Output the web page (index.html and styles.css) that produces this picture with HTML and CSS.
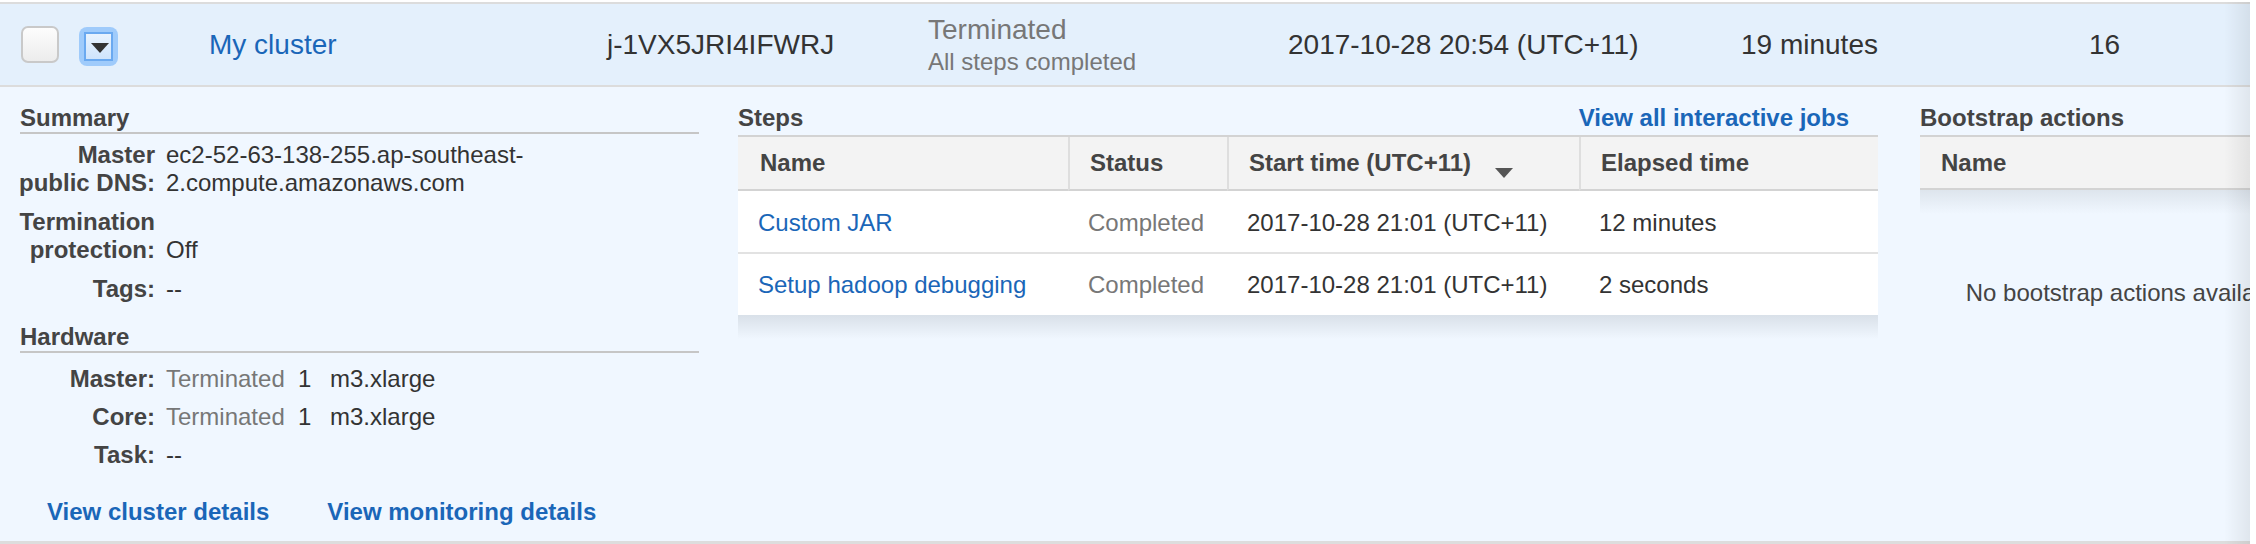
FILE: index.html
```html
<!DOCTYPE html>
<html lang="en">
<head>
<meta charset="utf-8">
<title>EMR cluster</title>
<link rel="stylesheet" href="styles.css">
</head>
<body>
<div class="viewport">
  <div class="grid-table">
    <div class="cluster-row">
      <div class="cell"><span class="checkbox"></span></div>
      <div class="cell">
        <span class="expand"><span class="expand-inner"><svg width="18" height="10" viewBox="0 0 18 10"><polygon points="0,0 18,0 9,10" fill="#333"/></svg></span></span>
      </div>
      <div class="cell"><a class="link" href="#">My cluster</a></div>
      <div class="cell">j-1VX5JRI4IFWRJ</div>
      <div class="cell status">
        <div class="st-main">Terminated</div>
        <div class="st-sub">All steps completed</div>
      </div>
      <div class="cell">2017-10-28 20:54 (UTC+11)</div>
      <div class="cell">19 minutes</div>
      <div class="cell">16</div>
    </div>

    <div class="details">
      <section class="summary">
        <h3 class="sec-title underlined">Summary</h3>
        <dl class="kv">
          <dt>Master<br>public DNS:</dt>
          <dd>ec2-52-63-138-255.ap-southeast-<br>2.compute.amazonaws.com</dd>
          <dt>Termination<br>protection:</dt>
          <dd><br>Off</dd>
          <dt>Tags:</dt>
          <dd>--</dd>
        </dl>
        <h3 class="sec-title underlined hw-title">Hardware</h3>
        <dl class="kv hw">
          <dt>Master:</dt>
          <dd><span class="hw-state">Terminated</span><span class="hw-count">1</span><span>m3.xlarge</span></dd>
          <dt>Core:</dt>
          <dd><span class="hw-state">Terminated</span><span class="hw-count">1</span><span>m3.xlarge</span></dd>
          <dt>Task:</dt>
          <dd>--</dd>
        </dl>
        <div class="bottom-links">
          <a class="link bold" href="#">View cluster details</a>
          <a class="link bold" href="#">View monitoring details</a>
        </div>
      </section>

      <section class="steps">
        <div class="sec-head">
          <h3 class="sec-title">Steps</h3>
          <a class="link bold" href="#">View all interactive jobs</a>
        </div>
        <div class="st-table">
          <div class="th">Name</div>
          <div class="th div">Status</div>
          <div class="th div">Start time (UTC+11)<svg class="sort" width="18" height="10" viewBox="0 0 18 10"><polygon points="0,0 18,0 9,10" fill="#555"/></svg></div>
          <div class="th div">Elapsed time</div>

          <div class="td sep"><a class="link" href="#">Custom JAR</a></div>
          <div class="td sep gray">Completed</div>
          <div class="td sep">2017-10-28 21:01 (UTC+11)</div>
          <div class="td sep">12 minutes</div>

          <div class="td"><a class="link" href="#">Setup hadoop debugging</a></div>
          <div class="td gray">Completed</div>
          <div class="td">2017-10-28 21:01 (UTC+11)</div>
          <div class="td">2 seconds</div>
        </div>
        <div class="shade"></div>
      </section>

      <section class="bootstrap">
        <h3 class="sec-title">Bootstrap actions</h3>
        <div class="bt-head">Name</div>
        <div class="bt-body">No bootstrap actions available</div>
      </section>
    </div>
  </div>
  <div class="edge"></div>
</div>
</body>
</html>
```

FILE: styles.css
```css
* { box-sizing: border-box; }

body {
  margin: 0;
  background: #fff;
  font-family: "Liberation Sans", Arial, sans-serif;
  color: #444;
}

.viewport {
  position: relative;
  width: 2250px;
  height: 544px;
  overflow: hidden;
  padding-top: 2px;
}

.grid-table { width: 2340px; }

.cluster-row {
  display: grid;
  grid-template-columns: 58px 130px 398px 321px 360px 453px 348px 1fr;
  align-items: center;
  height: 85px;
  padding-left: 21px;
  background: #e4f0fc;
  border-top: 2px solid #dcdcdc;
  border-bottom: 2px solid #dcdcdc;
  font-size: 28px;
  color: #333;
}

.cell { white-space: nowrap; }

.checkbox {
  display: block;
  width: 38px;
  height: 37px;
  border: 2px solid #c9c9c9;
  border-radius: 7px;
  background: linear-gradient(#fdfdfd, #ececec);
}

.expand {
  display: block;
  width: 39px;
  height: 39px;
  margin-top: 3px;
  padding: 5px;
  border-radius: 8px;
  background: #9fcbfb;
}

.expand-inner {
  display: flex;
  align-items: center;
  justify-content: center;
  width: 29px;
  height: 29px;
  border: 2px solid #6aa9f0;
  background: linear-gradient(#e9f3fe, #cfe4fc);
}

.expand-inner svg { margin-top: 3px; margin-left: 3px; }

.link { color: #1a66b8; text-decoration: none; }
.bold { font-weight: bold; }

.status { margin-top: 2px; line-height: 32px; color: #777; }
.st-sub { font-size: 24px; }

.details {
  display: flex;
  height: 457px;
  padding: 17px 0 0 20px;
  background: #f0f7ff;
  border-bottom: 3px solid #dddddd;
  font-size: 24px;
  line-height: 28px;
}

.summary { flex: none; width: 679px; margin-right: 39px; }
.steps { flex: none; width: 1140px; margin-right: 42px; }
.bootstrap { flex: none; width: 413px; }

.sec-title {
  margin: 0;
  font-size: 24px;
  line-height: 28px;
  font-weight: bold;
  color: #444;
}

.underlined { border-bottom: 2px solid #c6c6c6; }

.kv {
  display: grid;
  grid-template-columns: 135px 1fr;
  column-gap: 11px;
  row-gap: 11px;
  margin: 7px 0 0;
}

.kv dt {
  justify-self: end;
  text-align: right;
  white-space: nowrap;
  font-weight: bold;
  color: #444;
}

.kv dd { margin: 0; color: #333; white-space: nowrap; }

.hw-title { margin-top: 20px; }
.kv.hw { margin-top: 12px; row-gap: 10px; }

.hw-state { display: inline-block; width: 132px; color: #777; }
.hw-count { display: inline-block; width: 32px; }

.bottom-links {
  display: flex;
  gap: 58px;
  margin-top: 29px;
  padding-left: 27px;
}

.sec-head {
  display: flex;
  justify-content: space-between;
  align-items: baseline;
  padding-right: 29px;
}

.st-table {
  display: grid;
  grid-template-columns: 330px 159px 352px 1fr;
  margin-top: 3px;
  background: #fff;
  border-top: 2px solid #d3d3d3;
}

.th {
  display: flex;
  align-items: center;
  height: 54px;
  padding-left: 22px;
  background: #f3f3f3;
  border-bottom: 2px solid #d3d3d3;
  font-weight: bold;
  color: #444;
}

.th.div { border-left: 2px solid #dedede; padding-left: 20px; }

.sort { margin: 20px 0 0 24px; }

.td {
  display: flex;
  align-items: center;
  height: 61px;
  padding-left: 20px;
  color: #333;
  white-space: nowrap;
}

.td.sep { height: 63px; padding-top: 2px; border-bottom: 2px solid #e2e2e2; }
.td.gray { color: #777; }

.shade {
  height: 24px;
  background: linear-gradient(rgba(60, 70, 80, 0.13), rgba(60, 70, 80, 0));
}

.bt-head {
  display: flex;
  align-items: center;
  height: 55px;
  margin-top: 3px;
  padding-left: 21px;
  background: #f3f3f3;
  border-top: 2px solid #d3d3d3;
  border-bottom: 2px solid #d3d3d3;
  font-weight: bold;
  color: #444;
}

.bt-body {
  padding-top: 89px;
  text-align: center;
  white-space: nowrap;
  color: #444;
  background: linear-gradient(rgba(60, 70, 80, 0.1), rgba(60, 70, 80, 0) 24px) no-repeat;
}

.edge {
  position: absolute;
  top: 2px;
  right: 0;
  bottom: 0;
  width: 26px;
  background: linear-gradient(to right, rgba(0, 0, 0, 0), rgba(0, 0, 0, 0.07));
  pointer-events: none;
}
```
